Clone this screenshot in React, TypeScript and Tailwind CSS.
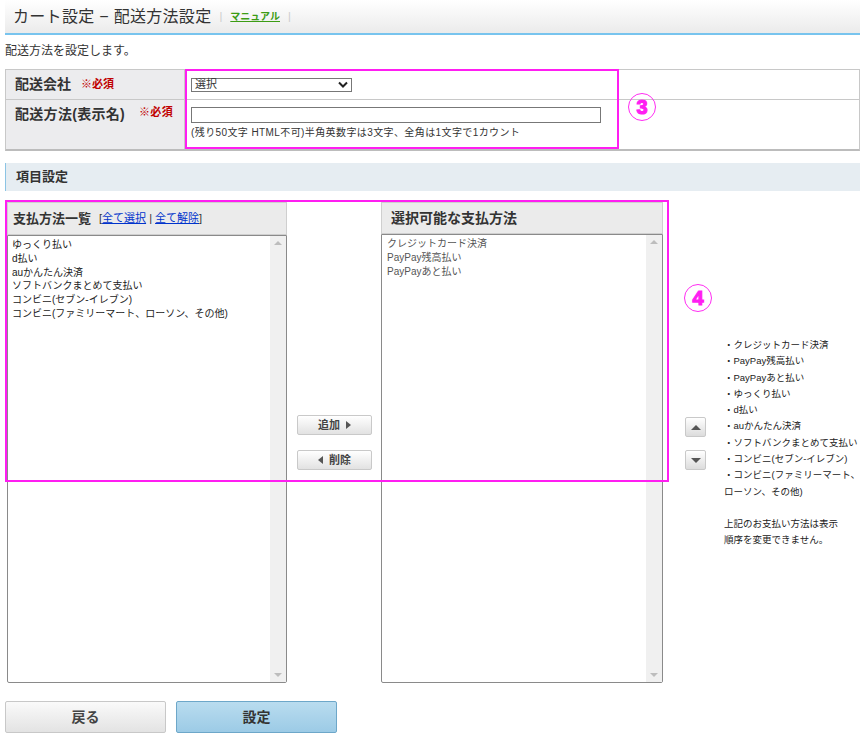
import React from "react";

const leftItems = [
  "ゆっくり払い",
  "d払い",
  "auかんたん決済",
  "ソフトバンクまとめて支払い",
  "コンビニ(セブン-イレブン)",
  "コンビニ(ファミリーマート、ローソン、その他)",
];

const rightItems = ["クレジットカード決済", "PayPay残高払い", "PayPayあと払い"];

const orderNotes = [
  "・クレジットカード決済",
  "・PayPay残高払い",
  "・PayPayあと払い",
  "・ゆっくり払い",
  "・d払い",
  "・auかんたん決済",
  "・ソフトバンクまとめて支払い",
  "・コンビニ(セブン-イレブン)",
  "・コンビニ(ファミリーマート、",
  "ローソン、その他)",
];

function Required({ gap = "ml-[10px]" }: { gap?: string }) {
  return <span className={`${gap} text-[11px] font-bold text-[#c00000]`}>※必須</span>;
}

function ScrollTrack() {
  return (
    <div className="w-[16px] shrink-0 bg-[#f0f0f0] flex flex-col justify-between items-center py-[5px]">
      <span className="w-0 h-0 border-l-[4px] border-r-[4px] border-b-[4px] border-l-transparent border-r-transparent border-b-[#bdbdbd]" />
      <span className="w-0 h-0 border-l-[4px] border-r-[4px] border-t-[4px] border-l-transparent border-r-transparent border-t-[#bdbdbd]" />
    </div>
  );
}

function Circled({ n }: { n: string }) {
  return (
    <div className="w-[28px] h-[28px] rounded-full border border-[#ff2cf2] flex items-center justify-center text-[#ff1ef2] text-[20px] font-bold not-italic leading-none font-['Liberation_Sans',sans-serif] [-webkit-text-stroke:1.2px_#ff1ef2]">
      {n}
    </div>
  );
}

export default function App() {
  return (
    <div className="relative w-[865px] h-[738px] bg-white px-[5px] text-[#333] font-['Liberation_Sans','Noto_Sans_CJK_JP',sans-serif]">
      {/* Header */}
      <div className="h-[35px] flex items-center pl-[8px] bg-gradient-to-b from-white to-[#ebebeb] border-b-2 border-[#78c4ee]">
        <h1 className="text-[16px] text-[#333] tracking-[0.3px] whitespace-nowrap">カート設定 − 配送方法設定</h1>
        <span className="ml-[8px] text-[11px] text-[#ccc]">|</span>
        <a className="ml-[8px] text-[10px] font-bold text-[#3c9c14] underline">マニュアル</a>
        <span className="ml-[8px] text-[11px] text-[#ccc]">|</span>
      </div>

      <p className="mt-[8px] text-[12px] leading-[16px]">配送方法を設定します。</p>

      {/* Form table */}
      <div className="mt-[10px] border border-[#c8c8c8] border-b-2 border-b-[#bcbcbc] text-[12px]">
        <div className="flex h-[30px] border-b border-[#c8c8c8]">
          <div className="w-[179px] shrink-0 bg-[#ececee] border-r border-[#c8c8c8] flex items-center pl-[9px] text-[14px] font-bold text-[#333] whitespace-nowrap">
            配送会社<Required />
          </div>
          <div className="flex items-center pl-[6px]">
            <div className="w-[161px] h-[14px] border border-[#777] bg-white flex items-center justify-between px-[3px] text-[11px] leading-none">
              <span>選択</span>
              <svg width="10" height="7" viewBox="0 0 10 7"><path d="M1 1.5 L5 5.5 L9 1.5" stroke="#222" strokeWidth="2" fill="none" /></svg>
            </div>
          </div>
        </div>
        <div className="flex h-[49px]">
          <div className="w-[179px] shrink-0 bg-[#ececee] border-r border-[#c8c8c8] flex items-start pt-[4px] pl-[9px] text-[14px] font-bold text-[#333] whitespace-nowrap tracking-[0.3px]">
            配送方法(表示名)<Required gap="ml-[14px]" />
          </div>
          <div className="pl-[6px] pt-[7px]">
            <div className="w-[410px] h-[16px] border border-[#777] bg-white" />
            <p className="mt-[4px] text-[10px] leading-[12px] text-[#333] whitespace-nowrap tracking-[0.4px]">(残り50文字 HTML不可)半角英数字は3文字、全角は1文字で1カウント</p>
          </div>
        </div>
      </div>

      {/* Section bar */}
      <div className="mt-[12px] h-[28px] bg-[#e6edf2] border-l border-[#8cc4e4] flex items-center pl-[10px] text-[13px] font-bold text-[#333]">
        項目設定
      </div>

      {/* Payment selection */}
      <div className="mt-[11px] flex">
        <div className="ml-[2px] w-[280px] shrink-0 flex flex-col">
          <div className="h-[33px] bg-[#ebebeb] border border-[#cfcfcf] flex items-center pl-[5px] whitespace-nowrap">
            <span className="text-[13px] font-bold">支払方法一覧</span>
            <span className="ml-[8px] text-[11px] text-[#333]">
              [<a className="text-[#0033cc] underline">全て選択</a> | <a className="text-[#0033cc] underline">全て解除</a>]
            </span>
          </div>
          <div className="h-[448px] border border-[#8a8a8a] rounded-b-[2px] flex bg-white">
            <ul className="flex-1 pl-[4px] pt-[2px] text-[10px] leading-[13.8px] text-[#222]">
              {leftItems.map((i) => (
                <li key={i}>{i}</li>
              ))}
            </ul>
            <ScrollTrack />
          </div>
        </div>

        <div className="w-[94px] shrink-0 flex flex-col items-start pl-[10px] pt-[213px] gap-[15px]">
          <button className="w-[75px] h-[20px] bg-gradient-to-b from-white to-[#e2e2e2] border border-[#c9c9c9] rounded-[2px] flex items-center justify-center gap-[6px] text-[11px] font-bold text-[#444]">
            追加
            <span className="w-0 h-0 border-t-[4px] border-b-[4px] border-l-[5px] border-t-transparent border-b-transparent border-l-[#555]" />
          </button>
          <button className="w-[75px] h-[20px] bg-gradient-to-b from-white to-[#e2e2e2] border border-[#c9c9c9] rounded-[2px] flex items-center justify-center gap-[6px] text-[11px] font-bold text-[#444]">
            <span className="w-0 h-0 border-t-[4px] border-b-[4px] border-r-[5px] border-t-transparent border-b-transparent border-r-[#555]" />
            削除
          </button>
        </div>

        <div className="w-[282px] shrink-0 flex flex-col">
          <div className="h-[32px] bg-[#ebebeb] border border-[#cfcfcf] flex items-center pl-[9px]">
            <span className="text-[14px] font-bold">選択可能な支払方法</span>
          </div>
          <div className="h-[449px] border border-[#8a8a8a] rounded-b-[2px] flex bg-white">
            <ul className="flex-1 pl-[5px] pt-[2px] text-[10px] leading-[13.8px] text-[#555]">
              {rightItems.map((i) => (
                <li key={i}>{i}</li>
              ))}
            </ul>
            <ScrollTrack />
          </div>
        </div>

        <div className="shrink-0 pl-[22px] pt-[215px] flex flex-col gap-[13px]">
          <button className="w-[21px] h-[20px] bg-gradient-to-b from-white to-[#dcdcdc] border border-[#c9c9c9] rounded-[2px] flex items-center justify-center">
            <span className="w-0 h-0 border-l-[5px] border-r-[5px] border-b-[5px] border-l-transparent border-r-transparent border-b-[#555]" />
          </button>
          <button className="w-[21px] h-[20px] bg-gradient-to-b from-white to-[#dcdcdc] border border-[#c9c9c9] rounded-[2px] flex items-center justify-center">
            <span className="w-0 h-0 border-l-[5px] border-r-[5px] border-t-[5px] border-l-transparent border-r-transparent border-t-[#555]" />
          </button>
        </div>

        <div className="shrink-0 pl-[18px] pt-[135px] text-[9.5px] leading-[16.3px] text-[#222] whitespace-nowrap">
          {orderNotes.map((t) => (
            <div key={t}>{t}</div>
          ))}
          <div className="mt-[16px]">上記のお支払い方法は表示</div>
          <div>順序を変更できません。</div>
        </div>
      </div>

      {/* Footer buttons */}
      <div className="mt-[18px] flex gap-[10px]">
        <button className="w-[161px] h-[32px] bg-gradient-to-b from-[#fafafa] to-[#e3e3e3] border border-[#c8c8c8] rounded-[2px] text-[14px] font-bold text-[#444]">
          戻る
        </button>
        <button className="w-[161px] h-[32px] bg-gradient-to-b from-[#b9dcef] to-[#9ccbe6] border border-[#6da7c9] rounded-[2px] text-[14px] font-bold text-[#333]">
          設定
        </button>
      </div>

      {/* Annotations */}
      <div className="absolute left-[185px] top-[69px] w-[434px] h-[80px] border-2 border-[#ff1ef2] pointer-events-none" />
      <div className="absolute left-[628px] top-[93px]">
        <Circled n="3" />
      </div>
      <div className="absolute left-[5px] top-[200px] w-[664px] h-[282px] border-2 border-[#ff1ef2] pointer-events-none" />
      <div className="absolute left-[684px] top-[284px]">
        <Circled n="4" />
      </div>
    </div>
  );
}
